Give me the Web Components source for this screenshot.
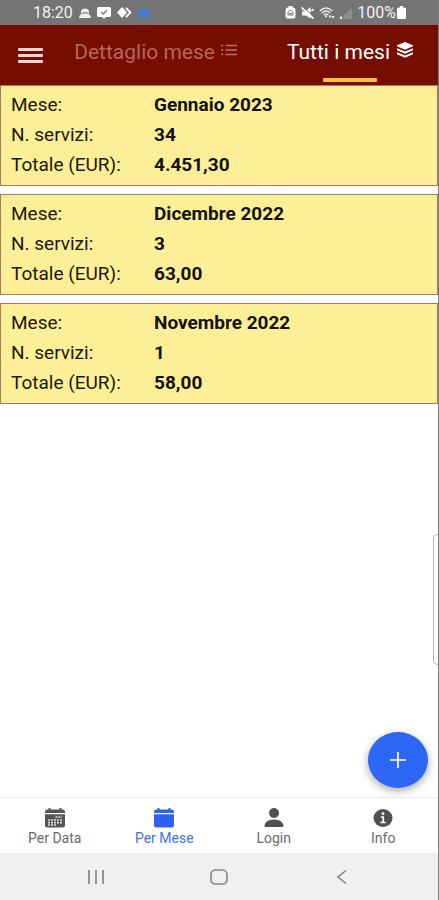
<!DOCTYPE html>
<html lang="it">
<head>
<meta charset="utf-8">
<meta name="viewport" content="width=device-width, initial-scale=1">
<title>Tutti i mesi</title>
<style>
  html, body { margin: 0; height: 100%; }
  body { background: #fff; font-family: Roboto, "Noto Sans", sans-serif; color: #1c1808; }
</style>
</head>
<body>
<mesi-app></mesi-app>

<script>
function define(name, html, setup) {
  const template = document.createElement('template');
  template.innerHTML = html;
  customElements.define(name, class extends HTMLElement {
    connectedCallback() {
      if (this.shadowRoot) return;
      const root = this.attachShadow({ mode: 'open' });
      root.append(template.content.cloneNode(true));
      if (setup) setup(this, root);
    }
  });
}

const ICONS = {
  robot: '<svg width="12" height="12" viewBox="0 0 12 12"><path fill="#ececec" d="M2 5Q2 1.500 6 1.500T10 5v1.500H2zM0 11Q.5 7 3 7h6q2.500 0 3 4z"/><path stroke="#a5a5a5" d="M3 5.500h6"/></svg>',
  check: '<svg width="14" height="12" viewBox="0 0 14 12"><path fill="#fff" d="M1.500 0h11Q14 0 14 1.500v7q0 1.500-1.500 1.500H9l-2 2-2-2H1.500Q0 10 0 8.500v-7Q0 0 1.500 0z"/><path fill="none" stroke="#777" stroke-width="1.300" d="M4 5l2.300 2L10 3"/></svg>',
  diamonds: '<svg width="15" height="11" viewBox="0 0 15 11"><path fill="#fff" d="M5 0l5 5.500L5 11 0 5.500z"/><path fill="none" stroke="#fff" stroke-width="1.800" d="M9 1l4.500 4.500L9 10"/></svg>',
  car: '<svg width="12" height="10" viewBox="0 0 12 10"><path fill="#4478c8" d="M2 0h8l1 3.500 1 1V10h-2V9H2v1H0V4.500l1-1z"/><path stroke="#5f7caa" d="M2.500 2.500h7M2 6h2m4 0h2"/></svg>',
  recycle: '<svg width="11" height="13" viewBox="0 0 11 13"><path fill="#fff" d="M3.500 0h4v1.500h1Q10.500 1.500 10.500 4v6.500q0 2-2 2h-6q-2 0-2-2V4q0-2.500 2-2.500h1z"/><path fill="none" stroke="#777" d="M3 6l2.500-2L8 6v3H3zM4 7.500h3"/></svg>',
  mute: '<svg width="13" height="12" viewBox="0 0 13 12"><path fill="#fff" d="M1 4.500h3.500L9.500 0v11.500L5 8.500H1z"/><path stroke="#747474" stroke-width="1" d="M2.500 0l10.500 10"/><path stroke="#fff" stroke-width="1.700" d="M.5.500l12 11M10.500 4l2-2"/></svg>',
  wifi: '<svg width="16" height="12" viewBox="0 0 16 12"><g fill="none" stroke="#e5e5e5" stroke-width="1.500"><path d="M.7 4Q7 -2 13.300 4M2.700 6Q7 2 11.300 6M4.700 8Q7 6 9.300 8"/></g><path fill="#eee" d="M5.500 8.500h3L7 11zM11 7.500l1.500 3h-3zM14 12l-1.500-3h3z"/></svg>',
  signal: '<svg width="12" height="12" viewBox="0 0 12 12"><path fill="#8e8e8e" d="M3 8.500L12 1v11H3z"/><path fill="#eee" d="M0 9.500h2V12H0z"/></svg>',
  battery: '<svg width="9" height="13" viewBox="0 0 9 13"><path fill="#fff" d="M3 0h3v1.500h1.500Q9 1.500 9 3v8.500Q9 13 7.500 13h-6Q0 13 0 11.500V3q0-1.500 1.500-1.500H3z"/></svg>',
  list: '<svg width="16" height="12" viewBox="0 0 16 12"><path stroke="#b97268" stroke-width="1.300" d="M4.500 1.500H16M4.500 6H16M4.500 10.500H16M0 1.500h2.300M0 6h2.300M0 10.500h2.300"/></svg>',
  layers: '<svg width="18" height="16" viewBox="0 0 18 16"><g fill="#fff"><path d="M9 0l8 3.300v1L9 7.700 1 4.300v-1z"/><path d="M1 6.300l8 3.300 8-3.300v2L9 11.700 1 8.300z"/><path d="M1 10.300l8 3.300 8-3.300v2L9 15.700 1 12.300z"/></g></svg>',
  calendarData: '<svg width="22" height="20" viewBox="0 0 22 20"><path fill="#555" d="M1 5V4q0-2.500 2.500-2.500h1V0h2v1.500h9V0h2v1.500h1Q21 1.500 21 4v1zM1 6.200h20V17q0 2.500-2.500 2.500h-15Q1 19.500 1 17z"/><path stroke="#ddd" stroke-width="1.700" stroke-dasharray="2 1" d="M11.500 9H18M4 12h14M4 14.700h14M4 17h8"/></svg>',
  calendar: '<svg width="22" height="20" viewBox="0 0 22 20"><path fill="#2d62f0" d="M1 5V4q0-2.500 2.500-2.500h1V0h2v1.500h9V0h2v1.500h1Q21 1.500 21 4v1zM1 6.200h20V17q0 2.500-2.500 2.500h-15Q1 19.500 1 17z"/></svg>',
  person: '<svg width="22" height="20" viewBox="0 0 22 20"><ellipse cx="11" cy="5" rx="5" ry="5" fill="#505050"/><path fill="#505050" d="M1.500 17.500Q2.500 11.500 11 11.500t9.500 6Q20.500 19 19 19H3q-1.500 0-1.500-1.500z"/></svg>',
  info: '<svg width="20" height="20" viewBox="0 0 20 20"><ellipse cx="10" cy="10" rx="9.500" ry="9" fill="#505050"/><circle cx="10" cy="5.700" r="1.400" fill="#fff"/><path fill="none" stroke="#fff" stroke-width="1.700" d="M7.800 9h2.400v5.500M7.300 14.500h5.500"/></svg>',
  recents: '<svg width="18" height="16" viewBox="0 0 18 16"><path stroke="#8a8a8a" stroke-width="1.800" d="M2 1v14M9 1v14M16 1v14"/></svg>',
  home: '<svg width="18" height="16" viewBox="0 0 18 16"><rect x="1" y="1" width="16" height="14" rx="4.500" fill="none" stroke="#858585" stroke-width="1.600"/></svg>',
  back: '<svg width="12" height="16" viewBox="0 0 12 16"><path fill="none" stroke="#808080" stroke-width="1.600" d="M10 1.500L2 8l8 6.500"/></svg>'
};

define('ui-icon', `<style>:host{display:inline-flex;flex:none}svg{display:block}</style>`, (el, root) => {
  root.append(document.createRange().createContextualFragment(ICONS[el.getAttribute('name')]));
});

define('status-bar', `
<style>
  :host { display: flex; align-items: center; justify-content: space-between; height: 25px; padding: 0 32px 0 33px; background: #747474; color: #f2f2f2; font-size: 16px; }
  div { display: flex; align-items: center; }
  .left { gap: 6px; }
  .right { gap: 5px; }
  .power { gap: 1px; }
</style>
<div class="left"><span>18:20</span><ui-icon name="robot"></ui-icon><ui-icon name="check"></ui-icon><ui-icon name="diamonds"></ui-icon><ui-icon name="car"></ui-icon></div>
<div class="right"><ui-icon name="recycle"></ui-icon><ui-icon name="mute"></ui-icon><ui-icon name="wifi"></ui-icon><ui-icon name="signal"></ui-icon><div class="power"><span>100%</span><ui-icon name="battery"></ui-icon></div></div>`);

define('app-header', `
<style>
  :host { display: flex; align-items: stretch; justify-content: space-between; height: 60px; padding: 0 24px 0 18px; background: #750d00; }
  button { border: 0; background: none; padding: 0; font: inherit; cursor: pointer; }
  .menu { display: flex; flex-direction: column; justify-content: center; gap: 3px; width: 25px; }
  .menu i { height: 3px; background: #eed9d6; border-radius: 1px; }
  nav { display: flex; gap: 50px; }
  .tab { display: grid; grid-template-rows: 53px 4px; justify-items: center; font-size: 21px; line-height: 24px; color: #b5665b; }
  .tab span { display: flex; align-items: center; gap: 6px; }
  .tab ui-icon { margin-bottom: 4px; }
  .tab[aria-selected="true"] { color: #fff; }
  .tab[aria-selected="true"]::after { content: ""; width: 54px; background: #f8c13c; border-radius: 1px; }
</style>
<button class="menu" aria-label="Menu"><i></i><i></i><i></i></button>
<nav role="tablist">
  <button class="tab" role="tab" aria-selected="false"><span>Dettaglio mese <ui-icon name="list"></ui-icon></span></button>
  <button class="tab" role="tab" aria-selected="true"><span>Tutti i mesi <ui-icon name="layers"></ui-icon></span></button>
</nav>`);

define('month-card', `
<style>
  :host { display: block; padding: 4px 10px 5px; background: #fcef98; border: 1px solid #b0785a; }
  dl { display: grid; grid-template-columns: 143px 1fr; margin: 0; font-size: 19px; line-height: 30px; }
  dd { margin: 0; font-weight: 700; color: #14120a; }
</style>
<dl>
  <dt>Mese:</dt><dd><slot name="month"></slot></dd>
  <dt>N. servizi:</dt><dd><slot name="services"></slot></dd>
  <dt>Totale (EUR):</dt><dd><slot name="total"></slot></dd>
</dl>`);

define('add-button', `
<style>
  :host { display: block; }
  button { display: grid; place-items: center; width: 60px; height: 56px; padding: 0; border: 0; border-radius: 50%; background: #2e66f6; box-shadow: 0 3px 8px rgba(0,0,0,.35); cursor: pointer; }
</style>
<button aria-label="Aggiungi"><svg width="16" height="16" viewBox="0 0 16 16"><path stroke="#fff" stroke-width="1.700" d="M8 0v16M0 8h16"/></svg></button>`);

define('nav-item', `
<style>
  :host { display: block; }
  a { display: flex; flex-direction: column; align-items: center; gap: 1px; padding-top: 10px; color: #6a6a6a; text-decoration: none; font-size: 14px; line-height: 18px; }
  :host([active]) a { color: #3f6ff0; }
</style>
<a href="#"><slot name="icon"></slot><slot></slot></a>`);

define('bottom-nav', `
<style>
  :host { display: grid; grid-template-columns: repeat(4, 1fr); height: 55px; border-top: 1px solid #eee; background: #fff; }
</style>
<nav-item><ui-icon slot="icon" name="calendarData"></ui-icon>Per Data</nav-item>
<nav-item active><ui-icon slot="icon" name="calendar"></ui-icon>Per Mese</nav-item>
<nav-item><ui-icon slot="icon" name="person"></ui-icon>Login</nav-item>
<nav-item><ui-icon slot="icon" name="info"></ui-icon>Info</nav-item>`);

define('system-nav', `
<style>
  :host { display: grid; grid-template-columns: repeat(3, 1fr); height: 47px; padding: 0 35px; background: #f0f0f0; }
  button { display: grid; place-items: center; border: 0; padding: 0; background: none; }
</style>
<button aria-label="Recenti"><ui-icon name="recents"></ui-icon></button>
<button aria-label="Home"><ui-icon name="home"></ui-icon></button>
<button aria-label="Indietro"><ui-icon name="back"></ui-icon></button>`);

define('mesi-app', `
<style>
  :host { display: flex; flex-direction: column; min-height: 100vh; box-sizing: border-box; border-right: 1px solid #7c7c7c; }
  main { position: relative; flex: 1; display: flex; flex-direction: column; gap: 8px; }
  .edge { position: absolute; right: 0; top: 449px; width: 4px; height: 129px; border: 1px solid #b8b8b8; border-right: 0; border-radius: 5px 0 0 5px; }
  add-button { position: absolute; right: 10px; bottom: 9px; }
</style>
<status-bar></status-bar>
<app-header></app-header>
<main>
  <month-card><span slot="month">Gennaio 2023</span><span slot="services">34</span><span slot="total">4.451,30</span></month-card>
  <month-card><span slot="month">Dicembre 2022</span><span slot="services">3</span><span slot="total">63,00</span></month-card>
  <month-card><span slot="month">Novembre 2022</span><span slot="services">1</span><span slot="total">58,00</span></month-card>
  <div class="edge"></div>
  <add-button></add-button>
</main>
<bottom-nav></bottom-nav>
<system-nav></system-nav>`);
</script>
</body>
</html>
